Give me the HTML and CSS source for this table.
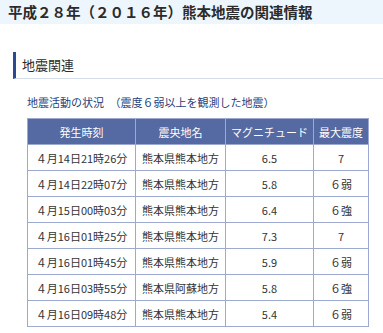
FILE: index.html
```html
<!DOCTYPE html>
<html lang="ja">
<head>
<meta charset="utf-8">
<link rel="stylesheet" href="styles.css">
</head>
<body>
<h1 class="page-title">平成２８年（２０１６年）熊本地震の関連情報</h1>
<h2 class="section-title">地震関連</h2>
<div class="content">
  <p class="sub-title">地震活動の状況　（震度６弱以上を観測した地震）</p>
  <table class="quake-table">
    <colgroup>
      <col class="c1"><col class="c2"><col class="c3"><col class="c4">
    </colgroup>
    <thead>
      <tr><th>発生時刻</th><th>震央地名</th><th>マグニチュード</th><th>最大震度</th></tr>
    </thead>
    <tbody>
      <tr><td>４月14日21時26分</td><td>熊本県熊本地方</td><td>6.5</td><td>7</td></tr>
      <tr><td>４月14日22時07分</td><td>熊本県熊本地方</td><td>5.8</td><td>６弱</td></tr>
      <tr><td>４月15日00時03分</td><td>熊本県熊本地方</td><td>6.4</td><td>６強</td></tr>
      <tr><td>４月16日01時25分</td><td>熊本県熊本地方</td><td>7.3</td><td>7</td></tr>
      <tr><td>４月16日01時45分</td><td>熊本県熊本地方</td><td>5.9</td><td>６弱</td></tr>
      <tr><td>４月16日03時55分</td><td>熊本県阿蘇地方</td><td>5.8</td><td>６強</td></tr>
      <tr><td>４月16日09時48分</td><td>熊本県熊本地方</td><td>5.4</td><td>６弱</td></tr>
    </tbody>
  </table>
</div>
</body>
</html>
```
FILE: styles.css
```css
html, body {
  margin: 0;
  padding: 0;
  background: #ffffff;
  font-family: "Noto Sans CJK JP", "Noto Sans", sans-serif;
  color: #333333;
}
.page-title {
  margin: 0;
  height: 24px;
  line-height: 23px;
  padding-left: 8px;
  background: #eef6fd;
  font-size: 14.5px;
  font-weight: bold;
  color: #2b2b2b;
}
.section-title {
  margin: 28px 0 0 13px;
  height: 26px;
  line-height: 26px;
  padding-left: 6px;
  border-left: 3px solid #2c4a94;
  border-bottom: 1px solid #d6dcea;
  font-size: 13px;
  font-weight: normal;
  color: #2b2b2b;
}
.content {
  padding-left: 27px;
}
.sub-title {
  margin: 11px 0 0 0;
  height: 28px;
  line-height: 24px;
  font-size: 11px;
  color: #1f3f7c;
}
.quake-table {
  border-collapse: collapse;
  width: 341px;
  table-layout: fixed;
  font-size: 11px;
}
.c1 { width: 108px; }
.c2 { width: 90px; }
.c3 { width: 88px; }
.c4 { width: 55px; }
.quake-table th,
.quake-table td {
  border: 1px solid #9ea9d0;
  height: 25px;
  padding: 0;
  text-align: center;
  vertical-align: middle;
  white-space: nowrap;
}
.quake-table th {
  background: #5569a2;
  color: #ffffff;
  font-weight: normal;
}
.quake-table td {
  color: #333333;
}
```
